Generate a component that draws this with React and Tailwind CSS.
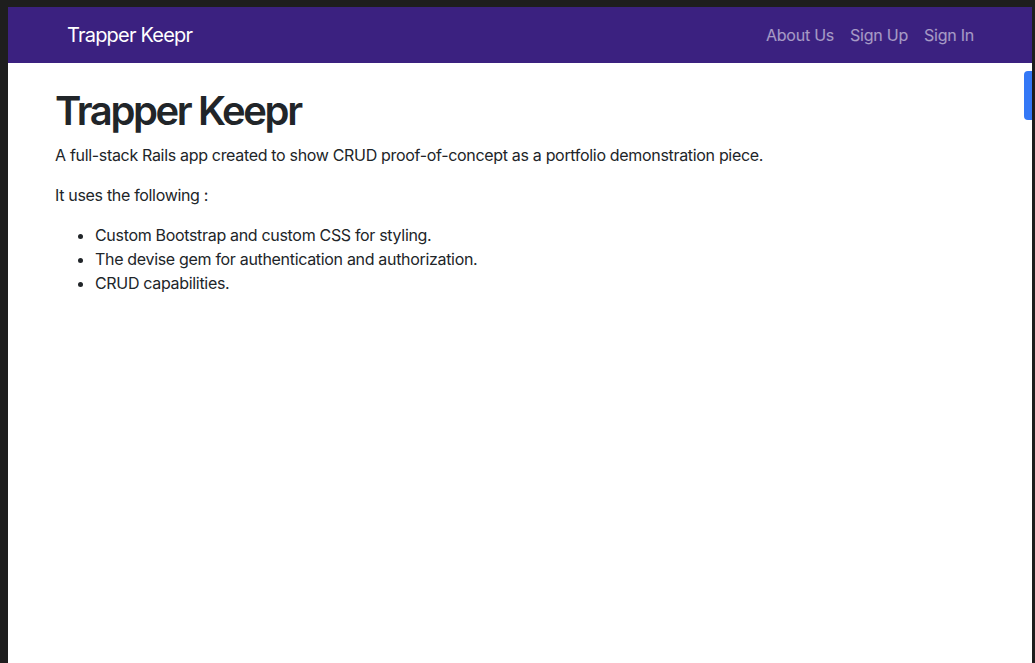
export default function App() {
  const links = ['About Us', 'Sign Up', 'Sign In'];
  const features = [
    'Custom Bootstrap and custom CSS for styling.',
    'The devise gem for authentication and authorization.',
    'CRUD capabilities.',
  ];

  return (
    <div
      className="h-[663px] w-[1035px] bg-[#1e1e1e] pt-[7px] pl-[8px] pr-[3px] overflow-hidden"
      style={{ fontFamily: 'Inter, "Noto Sans", sans-serif' }}
    >
      <div className="relative h-full bg-white text-[#212529]">
        {/* Navbar */}
        <nav className="h-[56px] bg-[#3b2180] flex items-center justify-between pl-[59px] pr-[50px]">
          <span className="text-[20px] text-white leading-none tracking-[-0.04em]">Trapper Keepr</span>
          <ul className="flex">
            {links.map((link) => (
              <li key={link} className="px-2 text-[16px] text-white/55 tracking-[-0.015em]">
                {link}
              </li>
            ))}
          </ul>
        </nav>

        {/* Main content */}
        <main className="pl-[47px] pt-[24px] tracking-[-0.02em]">
          <h1 className="text-[40px] leading-[1.2] font-semibold tracking-[-0.06em] mb-2">Trapper Keepr</h1>
          <p className="text-[16px] leading-6 mb-4">
            A full-stack Rails app created to show CRUD proof-of-concept as a portfolio demonstration piece.
          </p>
          <p className="text-[16px] leading-6 mb-4">It uses the following :</p>
          <ul className="list-disc pl-10 text-[16px] leading-6">
            {features.map((f) => (
              <li key={f}>{f}</li>
            ))}
          </ul>
        </main>

        {/* Floating side tab */}
        <div className="absolute right-0 top-[64px] w-[8px] h-[49px] bg-[#3478f6] rounded-l-[4px]" />
      </div>
    </div>
  );
}
